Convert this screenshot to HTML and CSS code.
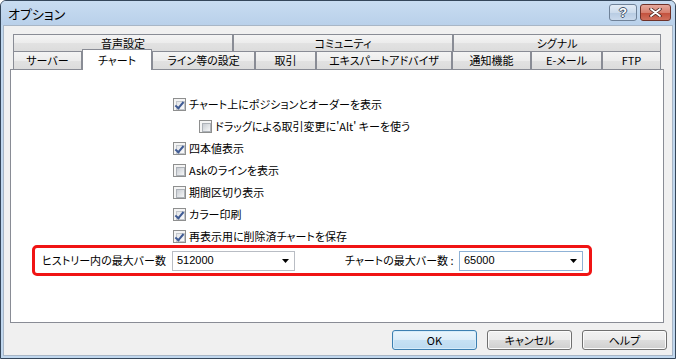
FILE: index.html
```html
<!DOCTYPE html>
<html lang="ja">
<head>
  <meta charset="UTF-8">
  <title>オプション</title>
  <link rel="stylesheet" href="styles.css">
</head>
<body>
  <div class="window">
    <div class="titlebar">
      <span class="title">オプション</span>
      <div class="caption-btns">
        <span class="cap help">?</span>
        <span class="cap close">
          <svg width="13" height="9" viewBox="0 0 13 9">
            <path d="M2 1 L11 8 M11 1 L2 8" stroke="#4a2620" stroke-width="3.4" stroke-linecap="round"/>
            <path d="M2 1 L11 8 M11 1 L2 8" stroke="#fff" stroke-width="1.8" stroke-linecap="round"/>
          </svg>
        </span>
      </div>
    </div>

    <div class="client">
      <div class="tabctrl">
        <div class="tabrow row1">
          <div class="tab">音声設定</div>
          <div class="tab">コミュニティ</div>
          <div class="tab">シグナル</div>
        </div>
        <div class="tabrow row2">
          <div class="tab">サーバー</div>
          <div class="tab active">チャート</div>
          <div class="tab">ライン等の設定</div>
          <div class="tab">取引</div>
          <div class="tab">エキスパートアドバイザ</div>
          <div class="tab">通知機能</div>
          <div class="tab">E-メール</div>
          <div class="tab">FTP</div>
        </div>

        <div class="panel">
          <div class="options">
            <div class="opt"><span class="cb checked"></span>チャート上にポジションとオーダーを表示</div>
            <div class="opt sub"><span class="cb"></span>ドラッグによる取引変更に'Alt' キーを使う</div>
            <div class="opt"><span class="cb checked"></span>四本値表示</div>
            <div class="opt"><span class="cb"></span>Askのラインを表示</div>
            <div class="opt"><span class="cb"></span>期間区切り表示</div>
            <div class="opt"><span class="cb checked"></span>カラー印刷</div>
            <div class="opt"><span class="cb checked"></span>再表示用に削除済チャートを保存</div>
          </div>

          <div class="bars">
            <span class="lbl lbl-history">ヒストリー内の最大バー数</span>
            <div class="combo combo-history">
              <span>512000</span>
              <svg class="arrow" width="7" height="4" viewBox="0 0 7 4"><path d="M0 0 H7 L3.5 4 Z" fill="#000"/></svg>
            </div>
            <span class="lbl lbl-chart">チャートの最大バー数 :</span>
            <div class="combo combo-chart">
              <span>65000</span>
              <svg class="arrow" width="7" height="4" viewBox="0 0 7 4"><path d="M0 0 H7 L3.5 4 Z" fill="#000"/></svg>
            </div>
          </div>
        </div>
      </div>

      <div class="footer">
        <button class="btn default">OK</button>
        <button class="btn">キャンセル</button>
        <button class="btn">ヘルプ</button>
      </div>
    </div>
  </div>
</body>
</html>
```

FILE: styles.css
```css
* {
  box-sizing: border-box;
}
body {
  margin: 0;
  background: #fff;
  color: #000;
  font-family: "Noto Sans CJK JP", "Noto Sans", sans-serif;
  font-size: 11px;
  font-feature-settings: "palt";
  line-height: 1;
}
.window {
  width: 676px;
  height: 359px;
  display: flex;
  flex-direction: column;
  border: 1px solid #34465a;
  border-radius: 6px 6px 0 0;
  background: #c0d7ee;
}

/* title bar */
.titlebar {
  height: 24px;
  flex: none;
  display: flex;
  align-items: center;
  padding: 0 4px 0 7px;
  background: linear-gradient(#c8dcf1, #b9d0ea);
  border-radius: 5px 5px 0 0;
}
.title {
  flex: 1;
  font-size: 13px;
}
.caption-btns {
  display: flex;
  gap: 3px;
  align-self: flex-start;
  margin-top: 3px;
}
.cap {
  height: 17px;
  display: flex;
  align-items: center;
  justify-content: center;
  border: 1px solid #6f8299;
  border-radius: 3px;
}
.help {
  width: 28px;
  background: linear-gradient(#e3ecf6 0%, #ccdbec 50%, #b7cbe2 51%, #c9d9ec 100%);
  color: #fff;
  font-family: "Liberation Sans", sans-serif;
  font-weight: bold;
  font-size: 13px;
  text-shadow: 1px 0 #42546b, -1px 0 #42546b, 0 1px #42546b, 0 -1px #42546b;
}
.close {
  width: 31px;
  border-color: #6e3128;
  background: linear-gradient(#e6a99c 0%, #d7806f 50%, #c24f3b 51%, #d0705c 100%);
}

/* client area */
.client {
  flex: 1;
  margin: 0 2px 2px;
  border: 1px solid #a8b6c6;
  background: #f0f0f0;
}
.tabctrl {
  width: 654px;
  margin: 8px 0 0 6px;
}
.tabrow {
  display: grid;
  margin: 0 3px;
}
.row1 {
  height: 17px;
  grid-template-columns: 220px 220px 208px;
}
.row2 {
  height: 18px;
  grid-template-columns: 69px 70px 103px 61px 136px 79px 71px 59px;
}
.tab {
  display: flex;
  align-items: center;
  justify-content: center;
  border: 1px solid #898c95;
  border-bottom: none;
  background: linear-gradient(#f4f4f4 0%, #ececec 50%, #e2e2e2 51%, #dcdcdc 100%);
  white-space: nowrap;
}
.tab.active {
  position: relative;
  z-index: 1;
  margin: -2px 0 -1px;
  background: #fff;
}
.panel {
  height: 254px;
  border: 1px solid #898c95;
  background: #fff;
}

/* check boxes */
.options {
  padding: 23px 0 0 162px;
}
.opt {
  height: 22px;
  display: flex;
  align-items: center;
  gap: 3px;
}
.opt.sub {
  padding-left: 26px;
}
.cb {
  position: relative;
  width: 13px;
  height: 13px;
  flex: none;
  padding: 2px;
  border: 1px solid #8e8f8f;
  background: #f4f4f4;
}
.cb::before {
  content: "";
  display: block;
  width: 7px;
  height: 7px;
  border: 1px solid #adb2b8;
  background: linear-gradient(135deg, #c9cdd3, #f5f6f7);
}
.cb.checked::before {
  border-color: #c3c7cc;
  background: linear-gradient(135deg, #e4e6ea, #fafafa);
}
.cb.checked::after {
  content: "";
  position: absolute;
  left: 3px;
  top: 1px;
  width: 3px;
  height: 7px;
  border: solid #3f5b94;
  border-width: 0 2px 2px 0;
  transform: rotate(40deg);
}

/* bar limits */
.bars {
  width: 560px;
  height: 31px;
  margin: -2px 0 0 21px;
  padding: 0 6px 0 7px;
  display: flex;
  align-items: center;
  border: 3px solid #f01414;
  border-radius: 5px;
}
.lbl {
  white-space: nowrap;
}
.lbl-history {
  width: 130px;
}
.lbl-chart {
  width: 114px;
  margin-left: 50px;
}
.combo {
  height: 20px;
  display: flex;
  align-items: center;
  justify-content: space-between;
  padding: 0 5px 0 4px;
  border: 1px solid #b9bdc4;
  background: #fff;
  font-family: "Liberation Sans", sans-serif;
  font-size: 11px;
}
.combo-history {
  width: 123px;
}
.combo-chart {
  width: 124px;
  border-color: #8fb2d6;
}

/* buttons */
.footer {
  display: flex;
  justify-content: flex-end;
  gap: 10px;
  padding: 7px 5px 0 0;
}
.btn {
  width: 85px;
  height: 20px;
  padding: 0;
  border: 1px solid #707070;
  border-radius: 3px;
  background: linear-gradient(#f2f2f2 0%, #ebebeb 50%, #dddddd 51%, #cfcfcf 100%);
  box-shadow: inset 0 0 0 1px #fbfbfb;
  font-family: "Noto Sans CJK JP", "Liberation Sans", sans-serif;
  font-size: 11px;
  font-feature-settings: "palt";
  color: #000;
}
.btn.default {
  border-color: #3c7fb1;
  background: linear-gradient(#eaf5fc 0%, #dcedf9 50%, #c6e1f4 51%, #bcdaf0 100%);
  box-shadow: inset 0 0 0 1px #d6ecfa;
}
```
